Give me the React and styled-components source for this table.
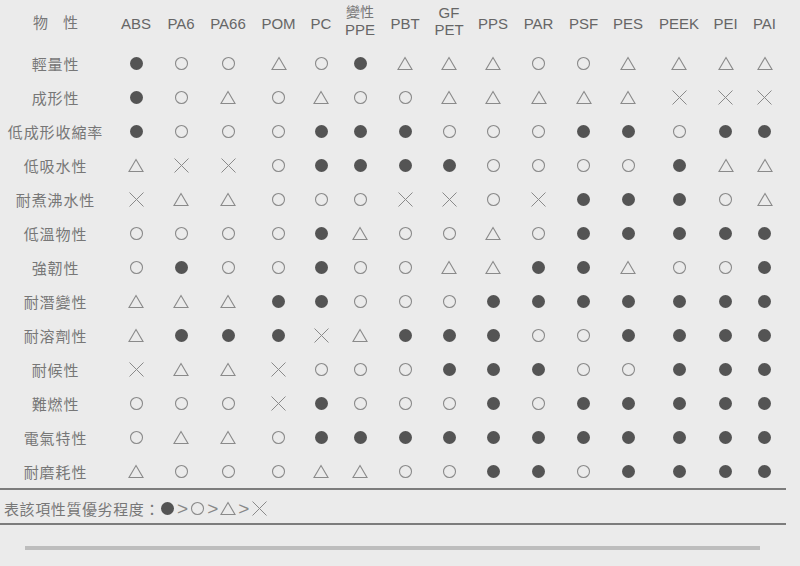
import React from "react";
import styled, { createGlobalStyle } from "styled-components";

const Global = createGlobalStyle`
  html, body { margin: 0; padding: 0; background: #ebebeb; }
  body { width: 800px; height: 566px; overflow: hidden; font-family: "Liberation Sans", "Noto Sans CJK TC", sans-serif; }
`;

const COLS = [113, 46, 44, 50, 51, 34, 44, 46, 42, 46, 45, 45, 44, 58, 35, 43];

const Page = styled.div`
  width: 800px;
  display: flex;
  flex-direction: column;
`;

const Table = styled.div`
  width: 786px;
  display: grid;
  grid-template-columns: ${COLS.map((c) => c + "px").join(" ")};
  grid-template-rows: 46px repeat(13, 34px);
  border-bottom: 2px solid #7c7c7c;
`;

const HeadCell = styled.div`
  display: flex;
  flex-direction: column;
  align-items: center;
  justify-content: center;
  color: #666;
  font-size: 15px;
  line-height: 17px;
  padding-bottom: ${(p) => (p.$two ? "4px" : "0")};
  white-space: nowrap;
`;

const CjkHead = styled.span`
  font-family: "Noto Sans CJK TC", sans-serif;
  font-size: 14px;
  color: #777;
  line-height: 15px;
  margin-bottom: 2px;
`;

const LabelHead = styled.div`
  display: flex;
  align-items: center;
  justify-content: center;
  font-family: "Noto Sans CJK TC", sans-serif;
  font-size: 15px;
  color: #777;
  padding-bottom: 3px;
  padding-right: 2px;
`;

const RowLabel = styled.div`
  display: flex;
  align-items: center;
  justify-content: center;
  font-family: "Noto Sans CJK TC", sans-serif;
  font-size: 15px;
  color: #777;
  letter-spacing: 0.9px;
  padding-right: 2px;
`;

const Cell = styled.div`
  display: flex;
  align-items: center;
  justify-content: center;
`;

const Legend = styled.div`
  width: 786px;
  height: 35px;
  display: flex;
  align-items: center;
  padding-left: 4px;
  padding-top: 4px;
  box-sizing: border-box;
  border-bottom: 2px solid #7c7c7c;
  font-family: "Noto Sans CJK TC", sans-serif;
  font-size: 15px;
  letter-spacing: 0.6px;
  color: #777;
`;

const Gt = styled.span`
  font-family: "Liberation Sans", sans-serif;
  font-size: 19px;
  color: #888;
  margin: 0 2px;
  letter-spacing: 0;
`;

const BarWrap = styled.div`
  padding: 21px 0 0 25px;
`;

const Bar = styled.div`
  width: 735px;
  height: 4px;
  background: #bdbdbd;
`;

function Sym({ t }) {
  if (t === "●")
    return (
      <svg width="15" height="15" viewBox="0 0 15 15">
        <circle cx="7.5" cy="7.5" r="6.5" fill="#545454" />
      </svg>
    );
  if (t === "○")
    return (
      <svg width="15" height="15" viewBox="0 0 15 15">
        <circle cx="7.5" cy="7.5" r="6" fill="none" stroke="#8a8a8a" strokeWidth="1.1" />
      </svg>
    );
  if (t === "△")
    return (
      <svg width="16" height="15" viewBox="0 0 16 15">
        <path d="M8 1.5 L15 13.5 L1 13.5 Z" fill="none" stroke="#8a8a8a" strokeWidth="1.1" strokeLinejoin="miter" />
      </svg>
    );
  return (
    <svg width="17" height="17" viewBox="0 0 17 17">
      <path d="M1.5 1.5 L15.5 15.5 M15.5 1.5 L1.5 15.5" stroke="#8a8a8a" strokeWidth="1" />
    </svg>
  );
}

const HEADERS = [
  ["ABS"], ["PA6"], ["PA66"], ["POM"], ["PC"], ["變性", "PPE"], ["PBT"], ["GF", "PET"],
  ["PPS"], ["PAR"], ["PSF"], ["PES"], ["PEEK"], ["PEI"], ["PAI"],
];

const ROWS = [
  ["輕量性", "●○○△○●△△△○○△△△△"],
  ["成形性", "●○△○△○○△△△△△×××"],
  ["低成形收縮率", "●○○○●●●○○○●●○●●"],
  ["低吸水性", "△××○●●●●○○○○●△△"],
  ["耐煮沸水性", "×△△○○○××○×●●●○△"],
  ["低溫物性", "○○○○●△○○△○●●●●●"],
  ["強韌性", "○●○○●○○△△●●△○○●"],
  ["耐潛變性", "△△△●●○○○●●●●●●●"],
  ["耐溶劑性", "△●●●×△●●●○○●●●●"],
  ["耐候性", "×△△×○○○●●●○○●●●"],
  ["難燃性", "○○○×●○○○●○●●●●●"],
  ["電氣特性", "○△△○●●●●●●●●●●●"],
  ["耐磨耗性", "△○○○△△○○●●○●●●●"],
];

export default function App() {
  return (
    <Page>
      <Global />
      <Table>
        <LabelHead>物　性</LabelHead>
        {HEADERS.map((h, i) => (
          <HeadCell key={i} $two={h.length > 1}>
            {h.length > 1 ? (
              <>
                {/[\u4e00-\u9fff]/.test(h[0]) ? <CjkHead>{h[0]}</CjkHead> : <span>{h[0]}</span>}
                <span>{h[1]}</span>
              </>
            ) : (
              <span>{h[0]}</span>
            )}
          </HeadCell>
        ))}
        {ROWS.map(([label, vals]) => (
          <React.Fragment key={label}>
            <RowLabel>{label}</RowLabel>
            {Array.from(vals).map((v, i) => (
              <Cell key={i}>
                <Sym t={v} />
              </Cell>
            ))}
          </React.Fragment>
        ))}
      </Table>
      <Legend>
        表該項性質優劣程度：
        <Sym t="●" />
        <Gt>&gt;</Gt>
        <Sym t="○" />
        <Gt>&gt;</Gt>
        <Sym t="△" />
        <Gt>&gt;</Gt>
        <Sym t="×" />
      </Legend>
      <BarWrap>
        <Bar />
      </BarWrap>
    </Page>
  );
}
